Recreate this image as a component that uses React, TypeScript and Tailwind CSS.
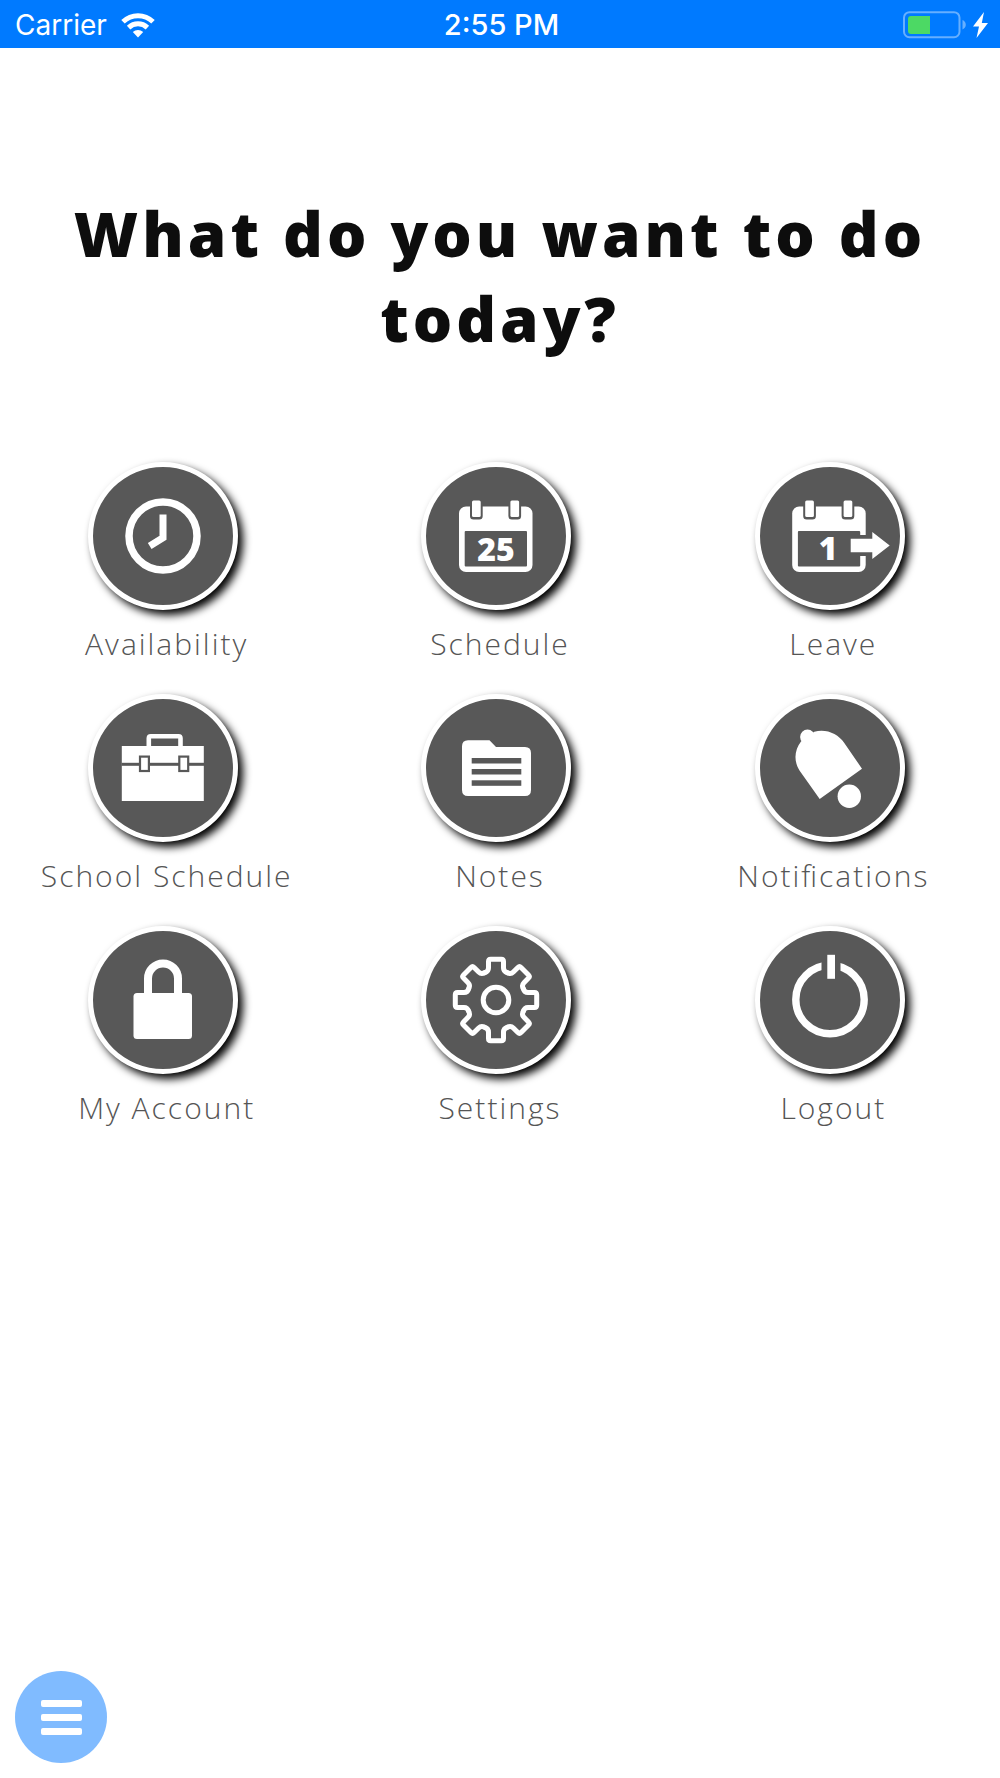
import type { ReactNode } from 'react';

interface MenuItem {
  label: string;
  icon: ReactNode;
}

const DISC = '#585858';

// Icons are drawn around the centre of the badge, so (0, 0) is the middle.
function Icon({ children }: { children: ReactNode }) {
  return (
    <svg viewBox="-70 -69 140 138" className="w-full h-full" fill="#fff" aria-hidden="true">
      {children}
    </svg>
  );
}

function CalendarBody() {
  return (
    <>
      <rect x="-37" y="-29.5" width="73.5" height="65.5" rx="7" />
      <rect x="-31.3" y="-5" width="62.3" height="35.5" rx="1" fill={DISC} />
      {[-24, 14.4].map((x) => (
        <g key={x}>
          <path d={`M${x - 2} -31 V-20 q0 3.5 3.5 3.5 h5.7 q3.5 0 3.5 -3.5 V-31z`} fill={DISC} />
          <rect x={x} y="-35.5" width="8.7" height="16.5" rx="1.5" />
        </g>
      ))}
    </>
  );
}

function ClockIcon() {
  return (
    <Icon>
      <circle r="34" fill="none" stroke="#fff" strokeWidth="7.5" />
      <path d="M0 -21.5 V1.7 L-13.3 10" fill="none" stroke="#fff" strokeWidth="7" />
    </Icon>
  );
}

function ScheduleIcon() {
  return (
    <Icon>
      <CalendarBody />
      <text x="0" y="24.5" textAnchor="middle" className="font-['Open_Sans'] text-[32px] font-extrabold">
        25
      </text>
    </Icon>
  );
}

function LeaveIcon() {
  return (
    <Icon>
      <g transform="translate(-.8)">
        <CalendarBody />
      </g>
      <text x="-2" y="24" textAnchor="middle" className="font-['Open_Sans'] text-[32px] font-extrabold">
        1
      </text>
      <rect x="29" y="-1" width="9" height="21" fill={DISC} />
      <path d="M20.7 2.8 H42.3 V-4 L59.7 9.5 L42.3 23 V16.2 H20.7z" />
    </Icon>
  );
}

function BriefcaseIcon() {
  return (
    <Icon>
      <path d="M-14.2 -21 V-29.7 q0 -2 2 -2 H15.5 q2 0 2 2 V-21" fill="none" stroke="#fff" strokeWidth="4.6" />
      <rect x="-41.2" y="-22" width="82" height="55" />
      <rect x="-41.5" y="-5.2" width="82.6" height="3" fill={DISC} />
      {[-23, 16.3].map((x) => (
        <rect key={x} x={x} y="-11.4" width="8.9" height="14.4" stroke={DISC} strokeWidth="2.2" />
      ))}
    </Icon>
  );
}

function NotesIcon() {
  return (
    <Icon>
      <path d="M-28 -27.8 H-6.5 L0 -21 H29 q6 0 6 6 V22 q0 6 -6 6 H-28 q-6 0 -6 -6 V-21.8 q0 -6 6 -6z" />
      {[-10, 1, 12.3].map((y) => (
        <rect key={y} x="-24.3" y={y} width="49.6" height="5.5" fill={DISC} />
      ))}
    </Icon>
  );
}

function BellIcon() {
  return (
    <Icon>
      <circle cx="-22.5" cy="-31" r="7.4" />
      <path d="M32 .7 L-10.3 31 L-30.5 2.5 C-37 -8 -35 -18.5 -29 -26.5 L-15.7 -36.3 C-4 -39.5 8 -34.5 14.3 -25z" />
      <circle cx="19.3" cy="28.3" r="11.7" />
    </Icon>
  );
}

function LockIcon() {
  return (
    <Icon>
      <path d="M-15 -6 V-21.5 a15 15 0 0 1 30 0 V-6" fill="none" stroke="#fff" strokeWidth="8" />
      <rect x="-29.5" y="-7" width="58.5" height="46" rx="3.5" />
    </Icon>
  );
}

function GearIcon() {
  return (
    <Icon>
      <g fill="none" stroke="#fff" strokeWidth="5" strokeLinecap="round">
        <circle r="12.8" />
        {[0, 45, 90, 135, 180, 225, 270, 315].map((angle) => (
          <path
            key={angle}
            transform={`rotate(${angle})`}
            d="M-11.3 -27.3 C-9 -28 -7.5 -29.5 -7.5 -32 V-38.5 q0 -2.2 2.2 -2.2 H5.3 q2.2 0 2.2 2.2 V-32 C7.5 -29.5 9 -28 11.3 -27.3"
          />
        ))}
      </g>
    </Icon>
  );
}

function PowerIcon() {
  return (
    <Icon>
      <circle cy="-.5" r="34.2" fill="none" stroke="#fff" strokeWidth="7.4" />
      <rect x="-8.5" y="-46" width="19" height="26" fill={DISC} />
      <rect x="-2.7" y="-45.2" width="7.7" height="24" />
    </Icon>
  );
}

const ITEMS: MenuItem[] = [
  { label: 'Availability', icon: <ClockIcon /> },
  { label: 'Schedule', icon: <ScheduleIcon /> },
  { label: 'Leave', icon: <LeaveIcon /> },
  { label: 'School Schedule', icon: <BriefcaseIcon /> },
  { label: 'Notes', icon: <NotesIcon /> },
  { label: 'Notifications', icon: <BellIcon /> },
  { label: 'My Account', icon: <LockIcon /> },
  { label: 'Settings', icon: <GearIcon /> },
  { label: 'Logout', icon: <PowerIcon /> },
];

function StatusBar() {
  return (
    <header className="grid grid-cols-3 items-center h-12 pt-[2px] pl-[15px] pr-3 bg-[#007aff] text-white font-['Inter',sans-serif] text-[28px]">
      <div className="flex items-center gap-[14px]">
        <span>Carrier</span>
        <svg viewBox="0 0 34 25" className="w-[34px] h-[25px]" fill="none" stroke="#fff" strokeWidth="5" aria-label="Wi-Fi">
          <path d="M2 8.8 C10.5 .6 23.5 .6 32 8.8" />
          <path d="M7.6 14.6 C13 9.6 21 9.6 26.4 14.6" />
          <path d="M11.8 19 C14.8 16.2 19.2 16.2 22.2 19 L17 24.4z" fill="#fff" stroke="none" />
        </svg>
      </div>
      <time className="text-center text-[29px] font-medium">2:55 PM</time>
      <div className="flex items-center justify-end gap-[7px]">
        <svg viewBox="0 0 63 28" className="w-[63px] h-7" aria-label="Battery">
          <rect x="1" y="1.2" width="55.5" height="25" rx="5.5" fill="none" stroke="#66afff" strokeWidth="2" />
          <path d="M59.5 9 q3.3 1.5 3.3 4.7 t-3.3 4.7z" fill="#66afff" />
          <path d="M27 5 V23 H8 q-3 0 -3 -3 V8 q0 -3 3 -3z" fill="#4cd964" />
        </svg>
        <svg viewBox="0 0 15 26" className="w-[15px] h-[26px]" fill="#fff" aria-label="Charging">
          <path d="M11 0 L0 14.5 H6 L3.5 26 L15 11 H8.8z" />
        </svg>
      </div>
    </header>
  );
}

function MenuButton({ label, icon }: MenuItem) {
  return (
    <button type="button" className="flex flex-col items-center">
      <span className="mr-[7px] w-[150px] h-[148px] rounded-[50%] border-[5px] border-white bg-[#585858] shadow-[5px_5px_8px_#000]">
        {icon}
      </span>
      <span className="mt-3 h-[72px] text-[30px] leading-[44px] font-light tracking-[2px] text-[#555] [font-feature-settings:'liga'_1]">
        {label}
      </span>
    </button>
  );
}

export default function App() {
  return (
    <div className="flex flex-col min-h-screen bg-white font-['Open_Sans',sans-serif]">
      <StatusBar />
      <main className="grow pt-[143px]">
        <h1 className="px-12 text-center text-[62px] leading-[85px] font-extrabold tracking-[4px] text-[#0d0d0d]">
          What do you want to do today?
        </h1>
        <nav className="grid grid-cols-3 mt-[101px]">
          {ITEMS.map((item) => (
            <MenuButton key={item.label} {...item} />
          ))}
        </nav>
      </main>
      <footer className="pl-[15px] pb-[15px]">
        <button
          type="button"
          aria-label="Menu"
          className="flex flex-col items-center justify-center gap-[7px] size-[92px] rounded-full bg-[#80bbff]"
        >
          <span className="w-[41px] h-[7px] rounded-xs bg-white" />
          <span className="w-[41px] h-[7px] rounded-xs bg-white" />
          <span className="w-[41px] h-[7px] rounded-xs bg-white" />
        </button>
      </footer>
    </div>
  );
}
